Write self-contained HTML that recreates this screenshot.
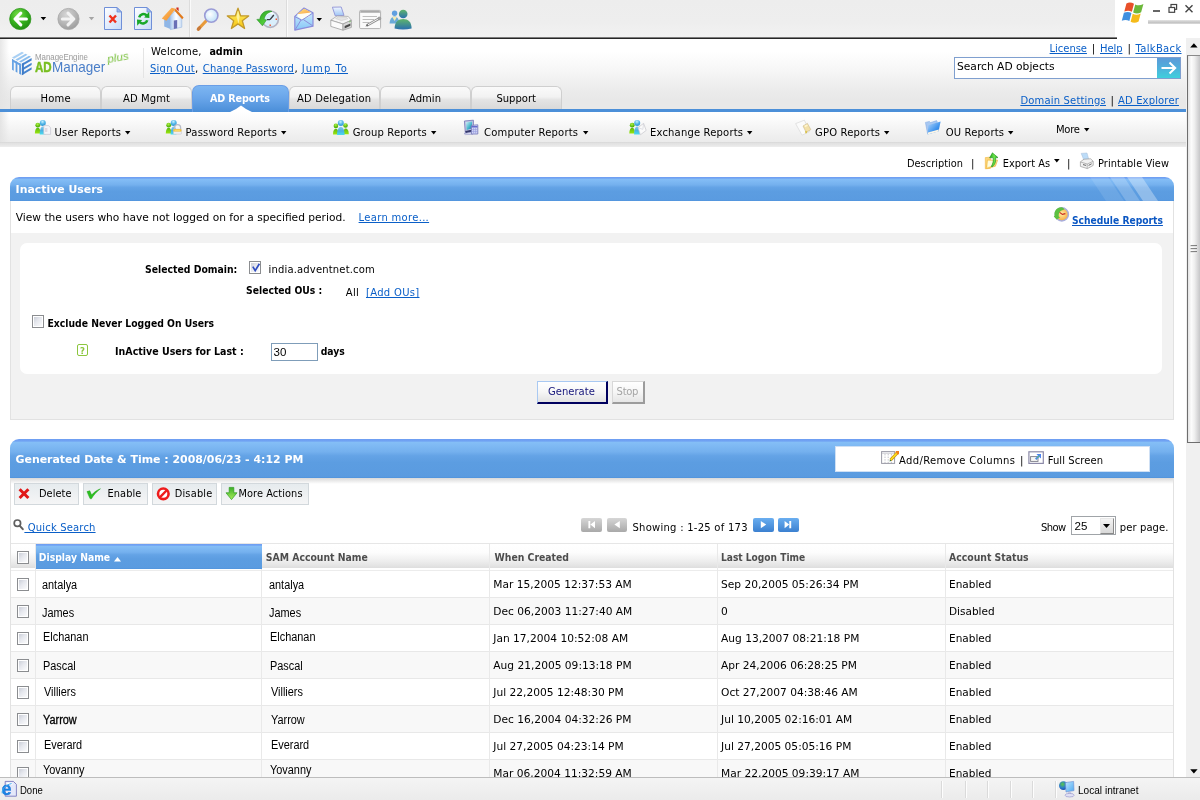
<!DOCTYPE html>
<html lang="en"><head><meta charset="utf-8"><title>ADManager Plus - Inactive Users</title>
<style>
html,body{margin:0;padding:0;background:#fff;}
body{width:1200px;height:800px;overflow:hidden;}
#page{position:relative;width:1200px;height:800px;overflow:hidden;background:#fff;font-family:"DejaVu Sans","Liberation Sans",sans-serif;font-size:10.3px;color:#000;}
.t{will-change:opacity;position:absolute;white-space:nowrap;line-height:20px;height:20px;display:block;}
.v{font-family:"DejaVu Sans","Liberation Sans",sans-serif;}
.c{font-family:"DejaVu Sans Condensed","DejaVu Sans","Liberation Sans",sans-serif;}
.a{font-family:"Liberation Sans","DejaVu Sans",sans-serif;}
svg{position:absolute;overflow:visible;}

</style></head>
<body>
<div id="page">
<div style="position:absolute;left:0px;top:0px;width:1115px;height:37px;background:linear-gradient(to bottom,#ededed 0%,#eeeeee 60%,#f2f2f2 100%);"></div>
<div style="position:absolute;left:0px;top:37px;width:1117px;height:1px;background:#7c7c7c;"></div>
<div style="position:absolute;left:0px;top:38px;width:1117px;height:1px;background:#262626;"></div>
<div style="position:absolute;left:189px;top:0px;width:1px;height:37px;background:#dcdcdc;"></div>
<div style="position:absolute;left:190px;top:0px;width:1px;height:37px;background:#fafafa;"></div>
<div style="position:absolute;left:286px;top:0px;width:1px;height:37px;background:#dcdcdc;"></div>
<div style="position:absolute;left:287px;top:0px;width:1px;height:37px;background:#fafafa;"></div>
<div style="position:absolute;left:1148px;top:20px;width:52px;height:4px;background:linear-gradient(to bottom,#e4e4e4,#c4c4c4 60%,#dcdcdc);"></div>
<div style="position:absolute;left:0px;top:39px;width:1186px;height:71px;background:linear-gradient(to bottom,#ffffff 0%,#ffffff 18%,#f6f6f6 45%,#ececec 70%,#e8e8e8 86%,#e8e8e8 100%);"></div>
<div style="position:absolute;left:0px;top:39px;width:9px;height:71px;background:linear-gradient(to right,rgba(228,228,228,.9),rgba(255,255,255,0));"></div>
<div style="position:absolute;left:143px;top:48px;width:1px;height:30px;background:#e4e4e4;"></div>
<div style="position:absolute;left:0px;top:109px;width:1186px;height:3px;background:#4b8fd8;"></div>
<div style="position:absolute;left:0px;top:112px;width:1186px;height:30px;background:linear-gradient(to bottom,#ffffff 0%,#fbfbfb 25%,#f3f3f3 60%,#ebebeb 100%);"></div>
<div style="position:absolute;left:0px;top:142px;width:1186px;height:5px;background:linear-gradient(to bottom,#d6d6d6 0%,#e1e1e1 25%,#e6e6e6 60%,#eeeeee 100%);"></div>
<div style="position:absolute;left:0px;top:112px;width:9px;height:30px;background:linear-gradient(to right,rgba(226,226,226,.9),rgba(255,255,255,0));"></div>
<div style="position:absolute;left:1186px;top:38px;width:14px;height:740px;background:#f0f0f0;"></div>
<div style="position:absolute;left:1187px;top:55px;width:13px;height:388px;background:linear-gradient(to right,#e4e4e4 0%,#fcfcfc 28%,#eeeeee 55%,#c6c6c8 100%);border-left:1px solid #6e6e6e;border-top:1px solid #8a8a8a;border-bottom:1px solid #6e6e6e;box-sizing:border-box;"></div>
<svg style="left:1186px;top:38px" width="14" height="740"><path d="M4.2 9.5 L11.6 9.5 L7.9 5.2 Z" fill="#000"/><path d="M4.2 731.3 L11.6 731.3 L7.9 735.6 Z" fill="#000"/><path d="M4.6 207.8h6.4M4.6 210.8h6.4M4.6 213.8h6.4" stroke="#555" stroke-width="1"/><path d="M4.6 208.8h6.4M4.6 211.8h6.4M4.6 214.8h6.4" stroke="#fff" stroke-width="1" opacity=".8"/></svg>
<div style="position:absolute;left:0px;top:777px;width:1200px;height:23px;background:linear-gradient(to bottom,#f4f4f4,#ebebeb);border-top:1px solid #bdbdbd;box-sizing:border-box;"></div>
<div style="position:absolute;left:941px;top:781px;width:1px;height:17px;background:#dadada;"></div>
<div style="position:absolute;left:942px;top:781px;width:1px;height:17px;background:#fdfdfd;"></div>
<div style="position:absolute;left:965px;top:781px;width:1px;height:17px;background:#dadada;"></div>
<div style="position:absolute;left:966px;top:781px;width:1px;height:17px;background:#fdfdfd;"></div>
<div style="position:absolute;left:987px;top:781px;width:1px;height:17px;background:#dadada;"></div>
<div style="position:absolute;left:988px;top:781px;width:1px;height:17px;background:#fdfdfd;"></div>
<div style="position:absolute;left:1010px;top:781px;width:1px;height:17px;background:#dadada;"></div>
<div style="position:absolute;left:1011px;top:781px;width:1px;height:17px;background:#fdfdfd;"></div>
<div style="position:absolute;left:1032px;top:781px;width:1px;height:17px;background:#dadada;"></div>
<div style="position:absolute;left:1033px;top:781px;width:1px;height:17px;background:#fdfdfd;"></div>
<div style="position:absolute;left:1055px;top:781px;width:1px;height:17px;background:#dadada;"></div>
<div style="position:absolute;left:1056px;top:781px;width:1px;height:17px;background:#fdfdfd;"></div>
<span class="t v" style="top:42px;font-size:10px;left:151px;letter-spacing:0.225px;">Welcome,</span>
<span class="t v" style="top:42px;font-size:9.6px;left:209.4px;font-weight:bold;">admin</span>
<a class="t v" style="top:59px;font-size:10px;left:150px;color:#0a5fc8;text-decoration:underline;letter-spacing:0.225px;">Sign Out</a>
<span class="t v" style="top:58px;font-size:10.3px;left:195px;">,</span>
<a class="t v" style="top:59px;font-size:10px;left:202.7px;color:#0a5fc8;text-decoration:underline;letter-spacing:0.222px;">Change Password</a>
<span class="t v" style="top:58px;font-size:10.3px;left:294.5px;">,</span>
<a class="t v" style="top:59px;font-size:10px;left:301.8px;color:#0a5fc8;text-decoration:underline;letter-spacing:1.018px;">Jump To</a>
<a class="t v" style="top:39px;font-size:10px;left:1049.6px;color:#0a5fc8;text-decoration:underline;letter-spacing:-0.051px;">License</a>
<span class="t v" style="top:38px;font-size:10.3px;left:1091.8px;">|</span>
<a class="t v" style="top:39px;font-size:10px;left:1100px;color:#0a5fc8;text-decoration:underline;letter-spacing:-0.104px;">Help</a>
<span class="t v" style="top:38px;font-size:10.3px;left:1127.4px;">|</span>
<a class="t v" style="top:39px;font-size:10px;left:1135.4px;color:#0a5fc8;text-decoration:underline;letter-spacing:0.337px;">TalkBack</a>
<a class="t v" style="top:91px;font-size:10px;left:1020.4px;color:#0a5fc8;text-decoration:underline;letter-spacing:0.171px;">Domain Settings</a>
<span class="t v" style="top:90px;font-size:10.3px;left:1110.5px;">|</span>
<a class="t v" style="top:91px;font-size:10px;left:1118px;color:#0a5fc8;text-decoration:underline;letter-spacing:0.144px;">AD Explorer</a>
<div style="position:absolute;left:954px;top:57px;width:227px;height:22px;background:#fff;border:1px solid #7f9fcf;box-sizing:border-box;"></div>
<span class="t v" style="top:57px;font-size:10.7px;left:957px;">Search AD objects</span>
<div style="position:absolute;left:1157px;top:58px;width:23px;height:20px;background:linear-gradient(to bottom,#5c9ad8 0%,#4fb0dc 50%,#3fd0dc 100%);"></div>
<svg style="left:1157px;top:58px" width="23" height="20"><path d="M4.5 10 H18 M12.5 4.5 L18.2 10 L12.5 15.5" fill="none" stroke="#fff" stroke-width="2"/></svg>
<div style="position:absolute;left:10px;top:86px;width:91px;height:23px;background:linear-gradient(to bottom,#fafafa 0%,#f2f2f2 45%,#e4e4e4 58%,#d9d9d9 100%);border:1px solid #cfcfcf;border-bottom:none;border-radius:6px 6px 0 0;box-sizing:border-box;"></div>
<div style="position:absolute;left:101px;top:86px;width:91px;height:23px;background:linear-gradient(to bottom,#fafafa 0%,#f2f2f2 45%,#e4e4e4 58%,#d9d9d9 100%);border:1px solid #cfcfcf;border-bottom:none;border-radius:6px 6px 0 0;box-sizing:border-box;"></div>
<div style="position:absolute;left:192px;top:85px;width:97px;height:27px;background:linear-gradient(to bottom,#7db6f2 0%,#6aa6ea 45%,#4a8ed8 100%);border:1px solid #6a9ee6;border-bottom:none;border-radius:7px 7px 0 0;box-sizing:border-box;"></div>
<div style="position:absolute;left:289px;top:86px;width:91px;height:23px;background:linear-gradient(to bottom,#fafafa 0%,#f2f2f2 45%,#e4e4e4 58%,#d9d9d9 100%);border:1px solid #cfcfcf;border-bottom:none;border-radius:6px 6px 0 0;box-sizing:border-box;"></div>
<div style="position:absolute;left:380px;top:86px;width:91px;height:23px;background:linear-gradient(to bottom,#fafafa 0%,#f2f2f2 45%,#e4e4e4 58%,#d9d9d9 100%);border:1px solid #cfcfcf;border-bottom:none;border-radius:6px 6px 0 0;box-sizing:border-box;"></div>
<div style="position:absolute;left:471px;top:86px;width:91px;height:23px;background:linear-gradient(to bottom,#fafafa 0%,#f2f2f2 45%,#e4e4e4 58%,#d9d9d9 100%);border:1px solid #cfcfcf;border-bottom:none;border-radius:6px 6px 0 0;box-sizing:border-box;"></div>
<span class="t v" style="top:89px;font-size:10px;left:40.6px;letter-spacing:0.156px;">Home</span>
<span class="t v" style="top:89px;font-size:10px;left:123px;letter-spacing:0.107px;">AD Mgmt</span>
<span class="t v" style="top:89px;font-size:9.6px;left:210px;font-weight:bold;color:#fff;letter-spacing:-0.123px;">AD Reports</span>
<span class="t v" style="top:89px;font-size:10px;left:297px;letter-spacing:0.155px;">AD Delegation</span>
<span class="t v" style="top:89px;font-size:10px;left:409px;letter-spacing:0.031px;">Admin</span>
<span class="t v" style="top:89px;font-size:10px;left:496.4px;letter-spacing:0.011px;">Support</span>
<svg style="left:230px;top:105px" width="22" height="7"><path d="M0 7 L6 4 L11 0.5 L16 4 L22 7 Z" fill="#fff"/></svg>
<span class="t v" style="top:123px;font-size:10px;left:54.5px;letter-spacing:0.196px;">User Reports</span>
<svg style="left:125px;top:130.8px" width="6" height="4"><path d="M0 0 H5.4 L2.7 3.4 Z" fill="#000"/></svg>
<span class="t v" style="top:123px;font-size:10px;left:185.5px;letter-spacing:0.217px;">Password Reports</span>
<svg style="left:281px;top:130.8px" width="6" height="4"><path d="M0 0 H5.4 L2.7 3.4 Z" fill="#000"/></svg>
<span class="t v" style="top:123px;font-size:10px;left:352.7px;letter-spacing:0.168px;">Group Reports</span>
<svg style="left:430.7px;top:130.8px" width="6" height="4"><path d="M0 0 H5.4 L2.7 3.4 Z" fill="#000"/></svg>
<span class="t v" style="top:123px;font-size:10px;left:484px;letter-spacing:0.183px;">Computer Reports</span>
<svg style="left:582.7px;top:130.8px" width="6" height="4"><path d="M0 0 H5.4 L2.7 3.4 Z" fill="#000"/></svg>
<span class="t v" style="top:123px;font-size:10px;left:650px;letter-spacing:0.173px;">Exchange Reports</span>
<svg style="left:746.7px;top:130.8px" width="6" height="4"><path d="M0 0 H5.4 L2.7 3.4 Z" fill="#000"/></svg>
<span class="t v" style="top:123px;font-size:10px;left:815px;letter-spacing:0.18px;">GPO Reports</span>
<svg style="left:884px;top:130.8px" width="6" height="4"><path d="M0 0 H5.4 L2.7 3.4 Z" fill="#000"/></svg>
<span class="t v" style="top:123px;font-size:10px;left:945.7px;letter-spacing:0.174px;">OU Reports</span>
<svg style="left:1008px;top:130.8px" width="6" height="4"><path d="M0 0 H5.4 L2.7 3.4 Z" fill="#000"/></svg>
<span class="t v" style="top:120px;font-size:10px;left:1056px;letter-spacing:-0.266px;">More</span>
<svg style="left:1084px;top:127.8px" width="6" height="4"><path d="M0 0 H5.4 L2.7 3.4 Z" fill="#000"/></svg>
<svg style="left:0;top:0" width="430" height="38">
<defs>
<radialGradient id="gback" cx="0.4" cy="0.3" r="0.75"><stop offset="0" stop-color="#7be04a"/><stop offset="0.55" stop-color="#35b01c"/><stop offset="1" stop-color="#1f8a12"/></radialGradient>
<radialGradient id="gfwd" cx="0.4" cy="0.3" r="0.75"><stop offset="0" stop-color="#d6d6d6"/><stop offset="0.6" stop-color="#b4b4b4"/><stop offset="1" stop-color="#9a9a9a"/></radialGradient>
<linearGradient id="gpage" x1="0" y1="0" x2="1" y2="1"><stop offset="0" stop-color="#ffffff"/><stop offset="1" stop-color="#c6daf8"/></linearGradient>
<linearGradient id="garr2" x1="0" y1="0" x2="1" y2="1"><stop offset="0" stop-color="#1f9a1f"/><stop offset="0.6" stop-color="#52cc3a"/><stop offset="1" stop-color="#2aa52a"/></linearGradient>
<linearGradient id="gstar" x1="0" y1="0" x2="0" y2="1"><stop offset="0" stop-color="#fff36a"/><stop offset="1" stop-color="#f7c412"/></linearGradient>
<radialGradient id="gglass" cx="0.4" cy="0.4" r="0.7"><stop offset="0" stop-color="#ffffff"/><stop offset="1" stop-color="#b5dcf7"/></radialGradient>
<linearGradient id="gwall" x1="0" y1="0" x2="1" y2="0"><stop offset="0" stop-color="#a9c9f0"/><stop offset="0.5" stop-color="#ffffff"/><stop offset="1" stop-color="#c9dcf4"/></linearGradient>
<linearGradient id="groof" x1="0" y1="0" x2="1" y2="1"><stop offset="0" stop-color="#ffc067"/><stop offset="1" stop-color="#f08a24"/></linearGradient>
<linearGradient id="gflap" x1="0" y1="0" x2="1" y2="1"><stop offset="0" stop-color="#ffe27a"/><stop offset="1" stop-color="#f79a4a"/></linearGradient>
<linearGradient id="gpaper" x1="0" y1="0" x2="0" y2="1"><stop offset="0" stop-color="#f2f7ff"/><stop offset="1" stop-color="#9cc4f6"/></linearGradient>
<linearGradient id="genv" x1="0" y1="0" x2="0" y2="1"><stop offset="0" stop-color="#dcf2ff"/><stop offset="1" stop-color="#84c6f6"/></linearGradient>
<linearGradient id="gmsn" x1="0" y1="0" x2="0" y2="1"><stop offset="0" stop-color="#5fb56a"/><stop offset="1" stop-color="#2a6fb0"/></linearGradient>
</defs>
<!-- back -->
<circle cx="20.3" cy="19" r="10.6" fill="url(#gback)" stroke="#2a9416" stroke-width="0.8"/>
<path d="M26.4 19 H16 M20.8 13.2 L15 19 L20.8 24.8" fill="none" stroke="#fff" stroke-width="3.1" stroke-linecap="round" stroke-linejoin="round"/>
<path d="M40.6 17 H46.2 L43.4 20.2 Z" fill="#000"/>
<!-- forward -->
<circle cx="68.5" cy="19" r="10.6" fill="url(#gfwd)" stroke="#a8a8a8" stroke-width="0.8"/>
<path d="M62.4 19 H72.8 M68 13.2 L73.8 19 L68 24.8" fill="none" stroke="#f2f2f2" stroke-width="3.1" stroke-linecap="round" stroke-linejoin="round"/>
<path d="M88.8 17 H94.2 L91.5 20.2 Z" fill="#a5a5a5"/>
<!-- stop page -->
<path d="M104.5 7.5 H117 L121.5 12 V29.5 H104.5 Z" fill="url(#gpage)" stroke="#6f8fd8" stroke-width="1"/>
<path d="M117 7.5 V12 H121.5 Z" fill="#9db9ee" stroke="#6f8fd8" stroke-width="0.8"/>
<path d="M109.5 15.5 L116 22.5 M116 15.5 L109.5 22.5" stroke="#f0321e" stroke-width="2.4"/>
<!-- refresh page -->
<path d="M134.5 7.5 H147 L151.5 12 V29.5 H134.5 Z" fill="url(#gpage)" stroke="#6f8fd8" stroke-width="1"/>
<path d="M147 7.5 V12 H151.5 Z" fill="#9db9ee" stroke="#6f8fd8" stroke-width="0.8"/>
<path d="M139.2 17.4 A4.4 4.4 0 0 1 146.6 15.4" fill="none" stroke="#18a82a" stroke-width="2.6"/><path d="M144.2 17.6 L149.2 11.8 L149.4 18 Z" fill="#18a82a"/>
<path d="M147.2 20.2 A4.4 4.4 0 0 1 139.8 22.2" fill="none" stroke="#18a82a" stroke-width="2.6"/><path d="M142.2 20 L137.2 25.8 L137 19.6 Z" fill="#18a82a"/>
<!-- home -->
<path d="M164.2 19 L170.4 15.6 V29 L164.2 26.6 Z" fill="#8fb6e6"/>
<path d="M170.4 15.6 L175 11 L181.8 18.2 V27.2 L170.4 29.6 Z" fill="url(#gwall)" stroke="#9ab8e2" stroke-width="0.6"/>
<path d="M171.6 7.8 L175.6 8.8 L166.4 20.8 L161.8 18.6 Z" fill="url(#groof)"/>
<path d="M175.6 8.8 L183.6 17.4 L182.2 19.2 L174.4 10.6 Z" fill="#e27a1c"/>
<path d="M176.4 7.4 h2.2 v3.8 l-2.2 -2.2 Z" fill="#cf2a1c"/>
<path d="M173.8 20.6 L177.2 20 V28.2 L173.8 28.9 Z" fill="#6a6fb6"/>
<!-- magnifier -->
<path d="M198.5 29 L206.5 20.5" stroke="#e89a3a" stroke-width="3.2" stroke-linecap="round"/>
<path d="M198.3 29.2 L199.6 27.8" stroke="#c87a3a" stroke-width="3.2" stroke-linecap="round"/>
<circle cx="211.3" cy="15.6" r="6.6" fill="url(#gglass)" stroke="#9a9bd6" stroke-width="1.6"/>
<!-- star -->
<path d="M238.0 8.1 L240.6 15.8 L248.7 15.9 L242.3 20.8 L244.6 28.5 L238.0 23.9 L231.4 28.5 L233.7 20.8 L227.3 15.9 L235.4 15.8 Z" fill="url(#gstar)" stroke="#c29a2c" stroke-width="1.3" stroke-linejoin="round"/>
<path d="M238 10.5 L239.6 16.8 L238.6 24 L236.6 17 Z" fill="#fff8b8" opacity=".75"/>
<!-- history -->
<circle cx="270.2" cy="19.2" r="8.2" fill="#d9eefb" stroke="#b4b4c4" stroke-width="1.7"/>
<path d="M266 14.5 A6 6 0 0 1 273.5 14" fill="none" stroke="#fff" stroke-width="2" opacity=".8"/>
<path d="M270 19.6 L273.8 15 M270 19.6 H267" stroke="#3c3c44" stroke-width="1.4"/>
<path d="M277 19.2 h-1.4 M270.2 26 v-1.4" stroke="#f0522a" stroke-width="1.4"/>
<path d="M256.8 19.4 L262.4 25.8 L266.6 19.8 L264.2 19.6 C264.4 15.6 267.2 12.6 272 11.4 C266.4 9.2 260.6 12.6 259.8 19.2 Z" fill="url(#garr2)" stroke="#1f8a1f" stroke-width="0.5"/>
<!-- mail -->
<path d="M294.8 16.4 L304 8 L313 12.8 V26.2 L294.8 30.2 Z" fill="url(#genv)" stroke="#8c8cda" stroke-width="1.2" stroke-linejoin="round"/>
<path d="M297.4 14 L304 8.8 L311 12.2 L304.6 15.6 Z" fill="url(#gflap)"/>
<path d="M297.4 14.2 L311 12.4 L309.2 16.6 L301.8 19.6 L297.4 16.6 Z" fill="#fffdf4"/>
<path d="M294.8 16.6 L301.8 20.2 L313 13 M295 30 L301 20 M313 26 L303.4 19.6" fill="none" stroke="#8c8cda" stroke-width="1"/>
<path d="M316.6 18 H322 L319.3 21.2 Z" fill="#000"/>
<!-- printer -->
<path d="M332.4 7.2 L341.2 7 L344 15.4 L335.2 15.8 Z" fill="url(#gpaper)" stroke="#8f92d6" stroke-width="0.9" stroke-linejoin="round"/>
<path d="M330.8 20.2 L337 16 L348.2 16.4 L351.4 20.2 L343 24 Z" fill="#f6f6f6" stroke="#a8a8a8" stroke-width="0.8" stroke-linejoin="round"/>
<path d="M335.6 18.6 L338.6 16.8 L346.4 17.2 L347.8 18.8 L341.4 20.6 Z" fill="#e4e4e4" stroke="#c4c4c4" stroke-width="0.5"/>
<path d="M330.8 20.2 L343 24 V30.2 L330.8 26.4 Z" fill="#fbfbfb" stroke="#a0a0a0" stroke-width="0.8" stroke-linejoin="round"/>
<path d="M343 24 L351.4 20.2 V27.4 L343 30.2 Z" fill="#d9d9d9" stroke="#a0a0a0" stroke-width="0.8" stroke-linejoin="round"/>
<path d="M344.6 26 L350.4 23.6 V25.8 L344.6 28.4 Z" fill="#4a4a4a"/>
<path d="M349.4 21.8 l1.2 -0.5" stroke="#58c040" stroke-width="1"/>
<!-- edit -->
<rect x="359.6" y="10.4" width="21" height="18.2" rx="1.2" fill="#fafafa" stroke="#b2b2b2" stroke-width="1"/>
<path d="M360.2 12.8 V11.6 Q360.2 10.9 361 10.9 H379.2 Q380 10.9 380 11.6 V12.8 Z" fill="#a9a9a9"/>
<path d="M362.6 16.5 H377 M362.6 19.5 H374 M362.6 22.5 H369" stroke="#bdbdbd" stroke-width="1"/>
<path d="M367.4 25.2 L379 18.6" stroke="#8e8e8e" stroke-width="2.6" stroke-linecap="round"/>
<path d="M368 24.8 L378.4 18.9" stroke="#f4f4f4" stroke-width="1"/>
<circle cx="379.4" cy="18.4" r="1.5" fill="#a4a4a4" stroke="#8a8a8a" stroke-width="0.5"/>
<path d="M365.4 26.6 L367.4 24.2 L368.2 25.8 Z" fill="#666"/>
<!-- messenger -->
<circle cx="394.6" cy="13.2" r="2.7" fill="#5f9fe0"/>
<path d="M389.6 23.5 C389.8 18.5 392 16.4 394.6 16.4 C397.2 16.4 399 18.5 399.4 23.5 Z" fill="#6aaad8"/>
<path d="M392.2 16.8 L394.6 21 L397 16.8 Z" fill="#f2e9b0"/>
<circle cx="403.2" cy="14" r="4.3" fill="url(#gmsn)"/>
<path d="M394.6 28.6 C394.6 21.6 398.4 19 403.2 19 C408 19 411.6 21.6 411.6 28.6 C406 29.8 400 29.8 394.6 28.6 Z" fill="url(#gmsn)"/>
</svg>
<svg style="left:1116px;top:0" width="84" height="38">
<g transform="translate(1.6,-0.4) scale(1.05)">
<path d="M8.4 3.6 C11 2.2 13.4 2.6 15.6 4 L13.6 11.6 C11.2 10.2 9 10.2 6.4 11.4 Z" fill="#e8502a"/>
<path d="M16.8 4.6 C19.4 6 21.8 5.6 24.6 4.2 L22.4 12 C20 13.4 17.4 13.6 14.8 12.2 Z" fill="#6cb83a"/>
<path d="M6 12.6 C8.6 11.4 10.8 11.4 13.2 12.8 L11.2 20.4 C8.8 19 6.4 19 4 20.2 Z" fill="#3f8fe0"/>
<path d="M14.4 13.4 C17 14.8 19.4 14.6 22 13.2 L20 20.8 C17.4 22.2 14.8 22.4 12.4 21 Z" fill="#f5bb1a"/>
</g>
<path d="M37 11 h7" stroke="#555" stroke-width="1.8"/>
<rect x="55" y="4.5" width="5.6" height="4.8" fill="none" stroke="#444" stroke-width="1.2"/>
<rect x="53" y="7.5" width="5.6" height="4.8" fill="#fff" stroke="#444" stroke-width="1.2"/>
<path d="M69.5 5.2 L76.5 12.2 M76.5 5.2 L69.5 12.2" stroke="#444" stroke-width="1.4"/>
</svg>
<span class="t v" style="top:154px;font-size:9.8px;left:907px;letter-spacing:0.02px;">Description</span>
<span class="t v" style="top:153px;font-size:10.3px;left:971px;">|</span>
<span class="t v" style="top:154px;font-size:9.8px;left:1002.7px;letter-spacing:0.05px;">Export As</span>
<svg style="left:1054px;top:159px" width="6" height="4"><path d="M0 0 H5.6 L2.8 3.4 Z" fill="#000"/></svg>
<span class="t v" style="top:153px;font-size:10.3px;left:1067px;">|</span>
<span class="t v" style="top:154px;font-size:9.8px;left:1098px;letter-spacing:0.087px;">Printable View</span>
<div style="position:absolute;left:10px;top:177px;width:1164px;height:24px;background:linear-gradient(to bottom,#6e9ef2 0%,#70a2f3 5%,#84bef6 9%,#74b0ee 33%,#64a3e6 43%,#5c9de1 60%,#5a9be0 96%,#4e92dc 100%);border-radius:9px 9px 0 0;box-sizing:border-box;overflow:hidden;"><svg style="left:1070px;top:0" width="94" height="24"><path d="M10 0 H28 L44 24 H26 Z" fill="rgba(255,255,255,.10)"/><path d="M30 0 H44 L60 24 H46 Z" fill="rgba(255,255,255,.20)"/><path d="M47 0 H62 L78 24 H63 Z" fill="rgba(255,255,255,.32)"/></svg></div>
<div style="position:absolute;left:10px;top:201px;width:1164px;height:219px;background:#f2f2f2;border:1px solid #e2e2e2;border-top:none;box-sizing:border-box;"></div>
<div style="position:absolute;left:11px;top:201px;width:1162px;height:32px;background:#fff;"></div>
<div style="position:absolute;left:20px;top:243px;width:1142px;height:131px;background:#fff;border-radius:7px;"></div>
<span class="t v" style="top:180px;font-size:10.9px;left:15.6px;font-weight:bold;color:#fff;">Inactive Users</span>
<span class="t v" style="top:208px;font-size:10.65px;left:15.8px;">View the users who have not logged on for a specified period.</span>
<a class="t v" style="top:208px;font-size:10px;left:358.6px;color:#0a5fc8;text-decoration:underline;letter-spacing:0.302px;">Learn more...</a>
<a class="t c" style="top:211px;font-size:10.2px;left:1072px;font-weight:bold;color:#0a56c2;text-decoration:underline;">Schedule Reports</a>
<span class="t c" style="top:259px;font-size:10.35px;left:145px;font-weight:bold;">Selected Domain:</span>
<span class="t v" style="top:260px;font-size:10px;left:268.5px;letter-spacing:0.166px;">india.adventnet.com</span>
<span class="t c" style="top:280px;font-size:10.3px;left:246px;font-weight:bold;">Selected OUs :</span>
<span class="t v" style="top:283px;font-size:10px;left:345.8px;letter-spacing:0.3px;">All</span>
<a class="t v" style="top:283px;font-size:10px;left:366px;color:#0a5fc8;text-decoration:underline;letter-spacing:0.306px;">[Add OUs]</a>
<span class="t c" style="top:313px;font-size:10.3px;left:47.5px;font-weight:bold;">Exclude Never Logged On Users</span>
<span class="t c" style="top:341px;font-size:10.55px;left:115px;font-weight:bold;">InActive Users for Last :</span>
<span class="t c" style="top:341px;font-size:10.3px;left:320.7px;font-weight:bold;">days</span>
<div style="position:absolute;left:249px;top:261px;width:12px;height:13px;background:linear-gradient(135deg,#c4c8d2 0%,#e6e8ee 45%,#ffffff 100%);border:1px solid #8b8d90;box-shadow:inset 0 0 0 1px #fff;box-sizing:border-box;"><svg style="left:1px;top:1px" width="10" height="10"><path d="M1.8 3.6 L4.2 7.6 L8.4 0.8" fill="none" stroke="#2e4cc0" stroke-width="1.7"/></svg></div>
<div style="position:absolute;left:32px;top:315px;width:12px;height:13px;background:linear-gradient(135deg,#c4c8d2 0%,#e6e8ee 45%,#ffffff 100%);border:1px solid #8b8d90;box-shadow:inset 0 0 0 1px #fff;box-sizing:border-box;"></div>
<div style="position:absolute;left:271px;top:343px;width:47px;height:18px;background:#fff;border:1px solid #7f9db9;box-sizing:border-box;"></div>
<span class="t a" style="top:342px;font-size:11.5px;left:273.5px;">30</span>
<div style="position:absolute;left:77px;top:344px;width:11px;height:12px;border:1px solid #8cc63e;border-radius:2px;box-sizing:border-box;background:#fff;"></div>
<span class="t v" style="top:341px;font-size:8.5px;left:80px;font-weight:bold;color:#8cc63e;">?</span>
<div style="position:absolute;left:537px;top:380.5px;width:70.5px;height:23.5px;background:linear-gradient(to bottom,#ffffff 0%,#f6f6f6 50%,#e2e2e2 100%);border-style:solid;border-color:#a9c9f2 #00005e #00005e #a9c9f2;border-width:1px 2px 2px 1px;box-sizing:border-box;"></div>
<span class="t v" style="top:382px;font-size:10px;left:548px;color:#15157a;letter-spacing:0.012px;">Generate</span>
<div style="position:absolute;left:611.5px;top:380.5px;width:33.5px;height:23.5px;background:linear-gradient(to bottom,#ffffff 0%,#f6f6f6 50%,#e6e6e6 100%);border-style:solid;border-color:#d8d8d8 #9c9c9c #9c9c9c #d8d8d8;border-width:1px 2px 2px 1px;box-sizing:border-box;"></div>
<span class="t v" style="top:382px;font-size:10px;left:616.6px;color:#a5a5a5;letter-spacing:-0.311px;">Stop</span>
<div style="position:absolute;left:10px;top:439px;width:1164px;height:39px;background:linear-gradient(to bottom,#6e9ef2 0%,#70a2f3 5%,#84bef6 9%,#74b0ee 33%,#64a3e6 43%,#5c9de1 60%,#5a9be0 96%,#4e92dc 100%);border-radius:9px 9px 0 0;box-sizing:border-box;"></div>
<div style="position:absolute;left:10px;top:478px;width:1164px;height:300px;background:#fff;border-left:1px solid #e2e2e2;border-right:1px solid #e2e2e2;box-sizing:border-box;"></div>
<div style="position:absolute;left:11px;top:478px;width:1162px;height:6px;background:linear-gradient(to bottom,#d9d9d9,#ffffff);"></div>
<span class="t v" style="top:450px;font-size:10.95px;left:15.5px;font-weight:bold;color:#fff;">Generated Date &amp; Time : 2008/06/23 - 4:12 PM</span>
<div style="position:absolute;left:835px;top:445.5px;width:315px;height:26.5px;background:#fff;border:1px solid #cfe0f4;box-sizing:border-box;"></div>
<span class="t v" style="top:451px;font-size:10px;left:899px;letter-spacing:0.353px;">Add/Remove Columns</span>
<span class="t v" style="top:450px;font-size:10.3px;left:1020px;">|</span>
<span class="t v" style="top:451px;font-size:10px;left:1047.7px;letter-spacing:0.063px;">Full Screen</span>
<div style="position:absolute;left:13.5px;top:482.5px;width:65px;height:22px;background:linear-gradient(to bottom,#e6ebee,#f5f5f6);border:1px solid #d2d8dc;box-sizing:border-box;"></div>
<div style="position:absolute;left:82.7px;top:482.5px;width:65px;height:22px;background:linear-gradient(to bottom,#e6ebee,#f5f5f6);border:1px solid #d2d8dc;box-sizing:border-box;"></div>
<div style="position:absolute;left:152px;top:482.5px;width:65.3px;height:22px;background:linear-gradient(to bottom,#e6ebee,#f5f5f6);border:1px solid #d2d8dc;box-sizing:border-box;"></div>
<div style="position:absolute;left:221.3px;top:482.5px;width:87.5px;height:22px;background:linear-gradient(to bottom,#e6ebee,#f5f5f6);border:1px solid #d2d8dc;box-sizing:border-box;"></div>
<span class="t v" style="top:484px;font-size:9.8px;left:38.9px;letter-spacing:0.099px;">Delete</span>
<span class="t v" style="top:484px;font-size:9.8px;left:107.5px;letter-spacing:0.075px;">Enable</span>
<span class="t v" style="top:484px;font-size:9.8px;left:174.7px;letter-spacing:0.209px;">Disable</span>
<span class="t v" style="top:484px;font-size:9.8px;left:238.5px;letter-spacing:0.074px;">More Actions</span>
<a class="t v" style="top:518px;font-size:10px;left:24.4px;color:#0a5fc8;text-decoration:underline;letter-spacing:0.167px;"> Quick Search</a>
<span class="t v" style="top:518px;font-size:10px;left:632.5px;letter-spacing:0.252px;">Showing : 1-25 of 173</span>
<span class="t v" style="top:518px;font-size:10px;left:1041px;letter-spacing:-0.578px;">Show</span>
<span class="t v" style="top:518px;font-size:10px;left:1119.8px;letter-spacing:0.093px;">per page.</span>
<div style="position:absolute;left:1071px;top:516px;width:45px;height:19px;background:#fff;border:1px solid #a0a4a8;box-sizing:border-box;"></div>
<span class="t a" style="top:516px;font-size:11.5px;left:1074.5px;">25</span>
<div style="position:absolute;left:1100px;top:518px;width:13.5px;height:15.5px;background:linear-gradient(to bottom,#f4f4f4,#d8d8d8);border:1px solid #8a8a8a;border-top-color:#e8e8e8;border-left-color:#e8e8e8;box-sizing:border-box;"><svg style="left:2.2px;top:5px" width="8" height="5"><path d="M0 0 H7 L3.5 4 Z" fill="#000"/></svg></div>
<div style="position:absolute;left:581px;top:518px;width:20.5px;height:14px;background:linear-gradient(to bottom,#d6d6d6,#a9a9a9);border-radius:2px;"><svg style="left:0;top:0" width="20.5" height="14"><path d="M7.4 3 h1.9 v7.2 h-1.9z M14 3 L9.4 6.6 L14 10.2 Z" fill="#fff"/></svg></div>
<div style="position:absolute;left:606.6px;top:518px;width:20.5px;height:14px;background:linear-gradient(to bottom,#d6d6d6,#a9a9a9);border-radius:2px;"><svg style="left:0;top:0" width="20.5" height="14"><path d="M12.8 3 L7.4 6.6 L12.8 10.2 Z" fill="#fff"/></svg></div>
<div style="position:absolute;left:753px;top:518px;width:20.5px;height:14px;background:linear-gradient(to bottom,#6aaef0,#3b80d0);border-radius:2px;"><svg style="left:0;top:0" width="20.5" height="14"><path d="M7.8 3 L13.2 6.6 L7.8 10.2 Z" fill="#fff"/></svg></div>
<div style="position:absolute;left:778px;top:518px;width:20.5px;height:14px;background:linear-gradient(to bottom,#6aaef0,#3b80d0);border-radius:2px;"><svg style="left:0;top:0" width="20.5" height="14"><path d="M13.2 3 h-1.9 v7.2 h1.9z M6.6 3 L11.2 6.6 L6.6 10.2 Z" fill="#fff"/></svg></div>
<div style="position:absolute;left:11px;top:543px;width:1162px;height:1px;background:#e6e6e6;"></div>
<div style="position:absolute;left:11px;top:544px;width:1162px;height:24px;background:linear-gradient(to bottom,#ffffff 0%,#fdfdfd 35%,#ececec 75%,#dedede 100%);"></div>
<div style="position:absolute;left:36px;top:544px;width:226px;height:25px;background:linear-gradient(to bottom,#6e9ef2 0%,#70a2f3 5%,#84bef6 9%,#74b0ee 33%,#64a3e6 43%,#5c9de1 60%,#5a9be0 96%,#4e92dc 100%);"></div>
<div style="position:absolute;left:11px;top:570px;width:1162px;height:1px;background:#ececec;"></div>
<div style="position:absolute;left:11px;top:597px;width:1162px;height:1px;background:#e8e8e8;"></div>
<div style="position:absolute;left:11px;top:598px;width:1162px;height:26px;background:#f8f8f8;"></div>
<div style="position:absolute;left:11px;top:624px;width:1162px;height:1px;background:#e8e8e8;"></div>
<div style="position:absolute;left:11px;top:651px;width:1162px;height:1px;background:#e8e8e8;"></div>
<div style="position:absolute;left:11px;top:652px;width:1162px;height:26px;background:#f8f8f8;"></div>
<div style="position:absolute;left:11px;top:678px;width:1162px;height:1px;background:#e8e8e8;"></div>
<div style="position:absolute;left:11px;top:705px;width:1162px;height:1px;background:#e8e8e8;"></div>
<div style="position:absolute;left:11px;top:706px;width:1162px;height:26px;background:#f8f8f8;"></div>
<div style="position:absolute;left:11px;top:732px;width:1162px;height:1px;background:#e8e8e8;"></div>
<div style="position:absolute;left:11px;top:759px;width:1162px;height:1px;background:#e8e8e8;"></div>
<div style="position:absolute;left:11px;top:760px;width:1162px;height:26px;background:#f8f8f8;"></div>
<div style="position:absolute;left:11px;top:786px;width:1162px;height:1px;background:#e8e8e8;"></div>
<div style="position:absolute;left:35px;top:544px;width:1px;height:234px;background:#e9e9e9;"></div>
<div style="position:absolute;left:261px;top:544px;width:1px;height:234px;background:#e9e9e9;"></div>
<div style="position:absolute;left:489px;top:544px;width:1px;height:234px;background:#e9e9e9;"></div>
<div style="position:absolute;left:717px;top:544px;width:1px;height:234px;background:#e9e9e9;"></div>
<div style="position:absolute;left:945px;top:544px;width:1px;height:234px;background:#e9e9e9;"></div>
<div style="position:absolute;left:36px;top:544px;width:226px;height:25px;background:linear-gradient(to bottom,#6e9ef2 0%,#70a2f3 5%,#84bef6 9%,#74b0ee 33%,#64a3e6 43%,#5c9de1 60%,#5a9be0 96%,#4e92dc 100%);"></div>
<div style="position:absolute;left:17px;top:551px;width:12px;height:13px;background:linear-gradient(135deg,#c4c8d2 0%,#e6e8ee 45%,#ffffff 100%);border:1px solid #8b8d90;box-shadow:inset 0 0 0 1px #fff;box-sizing:border-box;"></div>
<span class="t c" style="top:547px;font-size:10.3px;left:38.8px;font-weight:bold;color:#fff;">Display Name</span>
<svg style="left:114px;top:556.5px" width="8" height="5"><path d="M0 4.6 H7 L3.5 0 Z" fill="#fff"/></svg>
<span class="t c" style="top:547px;font-size:10.35px;left:265.8px;font-weight:bold;color:#4d4d4d;">SAM Account Name</span>
<span class="t c" style="top:547px;font-size:10.35px;left:494.5px;font-weight:bold;color:#4d4d4d;">When Created</span>
<span class="t c" style="top:548px;font-size:10.1px;left:721px;font-weight:bold;color:#4d4d4d;">Last Logon Time</span>
<span class="t c" style="top:547px;font-size:10.35px;left:949px;font-weight:bold;color:#4d4d4d;">Account Status</span>
<div style="position:absolute;left:17px;top:578px;width:12px;height:13px;background:linear-gradient(135deg,#c4c8d2 0%,#e6e8ee 45%,#ffffff 100%);border:1px solid #8b8d90;box-shadow:inset 0 0 0 1px #fff;box-sizing:border-box;"></div>
<span class="t a" style="top:575px;font-size:12px;left:41.9px;transform:scaleX(.908);transform-origin:0 0;">antalya</span>
<span class="t a" style="top:575px;font-size:12px;left:269.4px;transform:scaleX(.908);transform-origin:0 0;">antalya</span>
<span class="t v" style="top:575px;font-size:10.65px;left:493.3px;">Mar 15,2005 12:37:53 AM</span>
<span class="t v" style="top:575px;font-size:10.65px;left:721px;">Sep 20,2005 05:26:34 PM</span>
<span class="t v" style="top:574px;font-size:10.5px;left:949px;">Enabled</span>
<div style="position:absolute;left:17px;top:605px;width:12px;height:13px;background:linear-gradient(135deg,#c4c8d2 0%,#e6e8ee 45%,#ffffff 100%);border:1px solid #8b8d90;box-shadow:inset 0 0 0 1px #fff;box-sizing:border-box;"></div>
<span class="t a" style="top:603px;font-size:12px;left:41.9px;transform:scaleX(.908);transform-origin:0 0;">James</span>
<span class="t a" style="top:603px;font-size:12px;left:269.4px;transform:scaleX(.908);transform-origin:0 0;">James</span>
<span class="t v" style="top:602px;font-size:10.65px;left:493.3px;">Dec 06,2003 11:27:40 AM</span>
<span class="t v" style="top:602px;font-size:10.65px;left:721px;">0</span>
<span class="t v" style="top:601px;font-size:10.5px;left:949px;">Disabled</span>
<div style="position:absolute;left:17px;top:632px;width:12px;height:13px;background:linear-gradient(135deg,#c4c8d2 0%,#e6e8ee 45%,#ffffff 100%);border:1px solid #8b8d90;box-shadow:inset 0 0 0 1px #fff;box-sizing:border-box;"></div>
<span class="t a" style="top:627px;font-size:12px;left:42.7px;transform:scaleX(.908);transform-origin:0 0;">Elchanan</span>
<span class="t a" style="top:627px;font-size:12px;left:270.4px;transform:scaleX(.908);transform-origin:0 0;">Elchanan</span>
<span class="t v" style="top:629px;font-size:10.65px;left:493.3px;">Jan 17,2004 10:52:08 AM</span>
<span class="t v" style="top:629px;font-size:10.65px;left:721px;">Aug 13,2007 08:21:18 PM</span>
<span class="t v" style="top:628px;font-size:10.5px;left:949px;">Enabled</span>
<div style="position:absolute;left:17px;top:659px;width:12px;height:13px;background:linear-gradient(135deg,#c4c8d2 0%,#e6e8ee 45%,#ffffff 100%);border:1px solid #8b8d90;box-shadow:inset 0 0 0 1px #fff;box-sizing:border-box;"></div>
<span class="t a" style="top:656px;font-size:12px;left:42.7px;transform:scaleX(.908);transform-origin:0 0;">Pascal</span>
<span class="t a" style="top:656px;font-size:12px;left:270.4px;transform:scaleX(.908);transform-origin:0 0;">Pascal</span>
<span class="t v" style="top:656px;font-size:10.65px;left:493.3px;">Aug 21,2005 09:13:18 PM</span>
<span class="t v" style="top:656px;font-size:10.65px;left:721px;">Apr 24,2006 06:28:25 PM</span>
<span class="t v" style="top:655px;font-size:10.5px;left:949px;">Enabled</span>
<div style="position:absolute;left:17px;top:686px;width:12px;height:13px;background:linear-gradient(135deg,#c4c8d2 0%,#e6e8ee 45%,#ffffff 100%);border:1px solid #8b8d90;box-shadow:inset 0 0 0 1px #fff;box-sizing:border-box;"></div>
<span class="t a" style="top:682px;font-size:12px;left:43.7px;transform:scaleX(.908);transform-origin:0 0;">Villiers</span>
<span class="t a" style="top:682px;font-size:12px;left:271.2px;transform:scaleX(.908);transform-origin:0 0;">Villiers</span>
<span class="t v" style="top:683px;font-size:10.65px;left:493.3px;">Jul 22,2005 12:48:30 PM</span>
<span class="t v" style="top:683px;font-size:10.65px;left:721px;">Oct 27,2007 04:38:46 AM</span>
<span class="t v" style="top:682px;font-size:10.5px;left:949px;">Enabled</span>
<div style="position:absolute;left:17px;top:713px;width:12px;height:13px;background:linear-gradient(135deg,#c4c8d2 0%,#e6e8ee 45%,#ffffff 100%);border:1px solid #8b8d90;box-shadow:inset 0 0 0 1px #fff;box-sizing:border-box;"></div>
<span class="t a" style="top:710px;font-size:12px;left:42.7px;transform:scaleX(.908);transform-origin:0 0;-webkit-text-stroke:0.3px #000;">Yarrow</span>
<span class="t a" style="top:710px;font-size:12px;left:270.8px;transform:scaleX(.908);transform-origin:0 0;">Yarrow</span>
<span class="t v" style="top:710px;font-size:10.65px;left:493.3px;">Dec 16,2004 04:32:26 PM</span>
<span class="t v" style="top:710px;font-size:10.65px;left:721px;">Jul 10,2005 02:16:01 AM</span>
<span class="t v" style="top:709px;font-size:10.5px;left:949px;">Enabled</span>
<div style="position:absolute;left:17px;top:740px;width:12px;height:13px;background:linear-gradient(135deg,#c4c8d2 0%,#e6e8ee 45%,#ffffff 100%);border:1px solid #8b8d90;box-shadow:inset 0 0 0 1px #fff;box-sizing:border-box;"></div>
<span class="t a" style="top:735px;font-size:12px;left:43.7px;transform:scaleX(.908);transform-origin:0 0;">Everard</span>
<span class="t a" style="top:735px;font-size:12px;left:271.2px;transform:scaleX(.908);transform-origin:0 0;">Everard</span>
<span class="t v" style="top:737px;font-size:10.65px;left:493.3px;">Jul 27,2005 04:23:14 PM</span>
<span class="t v" style="top:737px;font-size:10.65px;left:721px;">Jul 27,2005 05:05:16 PM</span>
<span class="t v" style="top:736px;font-size:10.5px;left:949px;">Enabled</span>
<div style="position:absolute;left:17px;top:767px;width:12px;height:13px;background:linear-gradient(135deg,#c4c8d2 0%,#e6e8ee 45%,#ffffff 100%);border:1px solid #8b8d90;box-shadow:inset 0 0 0 1px #fff;box-sizing:border-box;"></div>
<span class="t a" style="top:760px;font-size:12px;left:43.0px;transform:scaleX(.908);transform-origin:0 0;">Yovanny</span>
<span class="t a" style="top:760px;font-size:12px;left:269.9px;transform:scaleX(.908);transform-origin:0 0;">Yovanny</span>
<span class="t v" style="top:764px;font-size:10.65px;left:493.3px;">Mar 06,2004 11:32:59 AM</span>
<span class="t v" style="top:764px;font-size:10.65px;left:721px;">Mar 22,2005 09:39:17 AM</span>
<span class="t v" style="top:763px;font-size:10.5px;left:949px;">Enabled</span>
<div style="position:absolute;left:0px;top:777px;width:1200px;height:23px;background:linear-gradient(to bottom,#f4f4f4,#ebebeb);border-top:1px solid #bdbdbd;box-sizing:border-box;"></div>
<div style="position:absolute;left:941px;top:781px;width:1px;height:17px;background:#dadada;"></div>
<div style="position:absolute;left:942px;top:781px;width:1px;height:17px;background:#fdfdfd;"></div>
<div style="position:absolute;left:965px;top:781px;width:1px;height:17px;background:#dadada;"></div>
<div style="position:absolute;left:966px;top:781px;width:1px;height:17px;background:#fdfdfd;"></div>
<div style="position:absolute;left:987px;top:781px;width:1px;height:17px;background:#dadada;"></div>
<div style="position:absolute;left:988px;top:781px;width:1px;height:17px;background:#fdfdfd;"></div>
<div style="position:absolute;left:1010px;top:781px;width:1px;height:17px;background:#dadada;"></div>
<div style="position:absolute;left:1011px;top:781px;width:1px;height:17px;background:#fdfdfd;"></div>
<div style="position:absolute;left:1032px;top:781px;width:1px;height:17px;background:#dadada;"></div>
<div style="position:absolute;left:1033px;top:781px;width:1px;height:17px;background:#fdfdfd;"></div>
<div style="position:absolute;left:1055px;top:781px;width:1px;height:17px;background:#dadada;"></div>
<div style="position:absolute;left:1056px;top:781px;width:1px;height:17px;background:#fdfdfd;"></div>
<span class="t a" style="top:780px;font-size:11px;left:20.4px;transform:scaleX(.865);transform-origin:0 0;">Done</span>
<span class="t a" style="top:780px;font-size:11px;left:1077.5px;transform:scaleX(.916);transform-origin:0 0;">Local intranet</span>
<svg style="left:11px;top:51px" width="22" height="25">
<path d="M1.0 6.6 L11.0 0.8 L13.0 1.9 L3.0 7.7 Z" fill="#a9d0f4"/>
<path d="M4.5 8.6 L14.5 2.7 L16.5 3.8 L6.5 9.7 Z" fill="#98c6f1"/>
<path d="M8.0 10.5 L18.0 4.7 L20.0 5.8 L10.0 11.6 Z" fill="#88bcee"/>
<path d="M1.0 8.0 L2.8 9.0 L2.8 19.8 L1.0 18.8 Z" fill="#6aa6e6"/>
<path d="M4.6 10.0 L6.4 11.0 L6.4 21.8 L4.6 20.8 Z" fill="#629fe2"/>
<path d="M8.2 12.0 L10.0 13.0 L10.0 23.8 L8.2 22.8 Z" fill="#5a98de"/>
<path d="M1.0 8.0 L10.0 13.0 L10.0 15.2 L1.0 10.2 Z" fill="#66a2e4"/>
<path d="M10.9 12.8 L20.6 7.1 L20.6 9.4 L10.9 15.1 Z" fill="#4584d0"/>
<path d="M10.9 17.4 L20.6 11.7 L20.6 14.0 L10.9 19.7 Z" fill="#4584d0"/>
<path d="M10.9 22.0 L20.6 16.3 L20.6 18.6 L10.9 24.3 Z" fill="#4584d0"/>
<path d="M10.9 12.8 L12.9 11.6 L12.9 23.1 L10.9 24.3 Z" fill="#3f7cc8"/>
</svg>
<span class="t a" style="top:47px;font-size:9px;left:35.4px;color:#9b9b9b;transform:scaleX(.875);transform-origin:0 0;">ManageEngine</span>
<span class="t a" style="top:57px;font-size:15px;left:34.8px;font-weight:bold;color:#78be20;transform:scaleX(.77);transform-origin:0 0;-webkit-text-stroke:0.5px #78be20;">AD</span>
<span class="t a" style="top:57px;font-size:15px;left:52.4px;color:#4a7ec8;transform:scaleX(.9);transform-origin:0 0;">Manager</span>
<span class="t a" style="top:49px;font-size:11.5px;left:108.6px;color:#7dc242;font-style:italic;transform:rotate(-10deg) scaleX(1.02);transform-origin:0 100%;">plus</span>
<svg style="left:0;top:112px" width="1186" height="32">
<defs>
<radialGradient id="pg" cx="0.45" cy="0.3" r="0.8"><stop offset="0" stop-color="#b6f04a"/><stop offset="0.55" stop-color="#5fc010"/><stop offset="1" stop-color="#3a9a08"/></radialGradient>
<linearGradient id="pgb" x1="0" y1="0" x2="0" y2="1"><stop offset="0" stop-color="#5cb812"/><stop offset="1" stop-color="#9be60e"/></linearGradient>
<radialGradient id="pb" cx="0.45" cy="0.3" r="0.8"><stop offset="0" stop-color="#c8f0ff"/><stop offset="0.5" stop-color="#4fb4e6"/><stop offset="1" stop-color="#2a8cd0"/></radialGradient>
<linearGradient id="pbb" x1="0" y1="0" x2="0" y2="1"><stop offset="0" stop-color="#8ccdf0"/><stop offset="0.5" stop-color="#4ab0e0"/><stop offset="1" stop-color="#48dcf0"/></linearGradient>
<linearGradient id="fold" x1="0" y1="0" x2="1" y2="1"><stop offset="0" stop-color="#b8d8fa"/><stop offset="0.6" stop-color="#3f94ee"/><stop offset="1" stop-color="#1f6fd8"/></linearGradient>
<linearGradient id="scr" x1="0" y1="0" x2="1" y2="1"><stop offset="0" stop-color="#d8f2fa"/><stop offset="0.6" stop-color="#3fb4c8"/><stop offset="1" stop-color="#3a58b0"/></linearGradient>

</defs>
<!-- user reports -->
<g transform="translate(34.5,0)">
<path d="M0.4 21.6 C0.4 17.6 1.6 15.8 3.3 15.8 C5 15.8 6 17.6 6 21.6 Z" fill="url(#pgb)"/>
<circle cx="3.3" cy="13.2" r="2.4" fill="url(#pg)"/>
<path d="M5.2 22.4 C5.2 17 6.6 14.4 8.3 14.4 C10 14.4 11 17 11 22.4 Z" fill="url(#pbb)"/>
<circle cx="8.3" cy="10.9" r="3" fill="url(#pb)"/>
</g>
<path d="M43.8 13.6 H48.6 L50.6 15.8 V22.4 H43.8 Z" fill="#f4f4f8" stroke="#c4c4d0" stroke-width="0.7"/>
<path d="M45 17 h2.4 M45 19 h2.4" stroke="#b9a8b8" stroke-width="0.7"/>
<!-- password reports -->
<g transform="translate(165.4,0)">
<path d="M0.4 21.6 C0.4 17.6 1.6 15.8 3.3 15.8 C5 15.8 6 17.6 6 21.6 Z" fill="url(#pgb)"/>
<circle cx="3.3" cy="13.2" r="2.4" fill="url(#pg)"/>
<path d="M5.2 22.4 C5.2 17 6.6 14.4 8.3 14.4 C10 14.4 11 17 11 22.4 Z" fill="url(#pbb)"/>
<circle cx="8.3" cy="10.9" r="3" fill="url(#pb)"/>
</g>
<path d="M174.6 17.4 V15.6 A3 3 0 0 1 180.6 15.6 V17.4" fill="none" stroke="#b8bcc8" stroke-width="1.3"/>
<rect x="173.4" y="17.2" width="8" height="5" rx="0.6" fill="#eeeef2" stroke="#c0c0c8" stroke-width="0.5"/>
<rect x="173.4" y="17.2" width="8" height="2.4" rx="0.6" fill="#f0b820"/>
<rect x="174.4" y="17.9" width="6" height="0.9" fill="#fde27a"/>
<!-- group reports -->
<path d="M333 22.4 C333 18.6 334.2 16.8 335.9 16.8 C337.6 16.8 338.4 18.6 338.4 22.4 Z" fill="url(#pgb)"/>
<circle cx="335.9" cy="13.9" r="2.3" fill="url(#pg)"/>
<path d="M343.4 22.2 C343.4 18.4 344.2 16.6 345.6 16.6 C347.4 16.6 348.8 18.4 348.8 22.2 Z" fill="url(#pgb)"/>
<circle cx="345.5" cy="13.5" r="2.3" fill="url(#pg)"/>
<path d="M337 23 C337 17.6 338.8 14.8 340.8 14.8 C342.8 14.8 344.6 17.6 344.6 23 Z" fill="url(#pbb)"/>
<circle cx="340.8" cy="11.1" r="3" fill="url(#pb)"/>
<!-- computer reports -->
<path d="M464.4 9 L473.4 8.2 V19.4 L465.4 21.6 Z" fill="#c4c6e4" stroke="#6f72b4" stroke-width="0.8"/>
<path d="M465.8 10.2 L472.2 9.6 L471.8 16.6 L466.6 18 Z" fill="url(#scr)"/>
<path d="M465.2 19 L472.6 17.4 V19.4 L466 21.2 Z" fill="#34386a"/>
<path d="M464 21.6 L471.6 20 L472.6 22.4 L465.4 22.6 Z" fill="#d8daf0" stroke="#8a8cc0" stroke-width="0.5"/>
<path d="M471.4 13.4 L477.8 12.8 V22 H471.4 Z" fill="#d4d8f8" stroke="#6f72b4" stroke-width="0.8"/>
<path d="M471.8 14.8 H477.4" stroke="#4a4ec0" stroke-width="1.2"/>
<path d="M473.6 15.6 V21.6 M475.6 15.6 V21.6 M471.8 17.6 H477.4 M471.8 19.6 H477.4" stroke="#9498dc" stroke-width="0.6"/>
<!-- exchange reports -->
<g transform="translate(628.9,0)">
<path d="M0.4 21.6 C0.4 17.6 1.6 15.8 3.3 15.8 C5 15.8 6 17.6 6 21.6 Z" fill="url(#pgb)"/>
<circle cx="3.3" cy="13.2" r="2.4" fill="url(#pg)"/>
<path d="M5.2 22.4 C5.2 17 6.6 14.4 8.3 14.4 C10 14.4 11 17 11 22.4 Z" fill="url(#pbb)"/>
<circle cx="8.3" cy="10.9" r="3" fill="url(#pb)"/>
</g>
<path d="M638 15.6 L643.6 11.4 L646.2 18.4 L640.4 22.8 Z" fill="#fafafa" stroke="#c6c6cc" stroke-width="0.7"/>
<path d="M638 15.6 L642.8 17.4 L643.6 11.4" fill="none" stroke="#cfcfd6" stroke-width="0.6"/>
<!-- gpo reports -->
<path d="M795.6 11.6 L804.4 8.2 L809.6 19.6 L802 23.2 Z" fill="#fbfbfb" stroke="#dcdcdc" stroke-width="0.8"/>
<path d="M803 14 L807.4 11.4 L810.8 17.6 L806.2 20.4 Z" fill="#f3e0a8" stroke="#c9b88a" stroke-width="0.6"/>
<path d="M804.4 13.8 L807 12.4 L807.8 13.8 L805.2 15.2 Z" fill="#fff6d0"/>
<path d="M805 19.6 L806.6 18.8 L807 21 L805.6 21.6 Z" fill="#d8c040"/>
<!-- ou reports -->
<path d="M925.4 10.4 L929.4 9.4 L930.6 10.6 L936.6 8.6 L937.4 10.2 L927.6 21.8 Z" fill="#a8c8f2" stroke="#7aa4e0" stroke-width="0.5"/>
<path d="M928.4 13.2 L940.6 9.6 L938.6 19.2 L927.6 22.4 Z" fill="url(#fold)"/>
<path d="M928 20.6 L938.8 17.4 L938.4 19.4 L927.6 22.6 Z" fill="#fdf6e6"/>
</svg>
<svg style="left:0;top:0" width="1200" height="800" pointer-events="none">
<defs>
<linearGradient id="yfold" x1="0" y1="0" x2="1" y2="1"><stop offset="0" stop-color="#fffbd6"/><stop offset="1" stop-color="#f8cc50"/></linearGradient>
<linearGradient id="garr" x1="0" y1="0" x2="1" y2="0"><stop offset="0" stop-color="#1c9a1c"/><stop offset="0.55" stop-color="#6ee84a"/><stop offset="1" stop-color="#1c9a1c"/></linearGradient>
<linearGradient id="gdown" x1="0" y1="0" x2="0" y2="1"><stop offset="0" stop-color="#3cae28"/><stop offset="1" stop-color="#a8ee5a"/></linearGradient>
<radialGradient id="clk" cx="0.5" cy="0.45" r="0.6"><stop offset="0" stop-color="#fff0a8"/><stop offset="1" stop-color="#f5a030"/></radialGradient>
<radialGradient id="globe" cx="0.4" cy="0.35" r="0.7"><stop offset="0" stop-color="#5ac84a"/><stop offset="0.6" stop-color="#2a7ad0"/><stop offset="1" stop-color="#1a4aa0"/></radialGradient>
<linearGradient id="mon" x1="0" y1="0" x2="1" y2="1"><stop offset="0" stop-color="#bfe6ff"/><stop offset="1" stop-color="#4aa8f0"/></linearGradient>
</defs>
<!-- export as -->
<path d="M985.3 157.6 L989.6 157.2 L990.4 158.6 L990.4 168.4 L985.3 168.8 Z" fill="#fbd77a" stroke="#f2b440" stroke-width="0.6"/>
<path d="M987.4 160 L997.6 160.2 L995.4 166.2 L986.2 168.6 Z" fill="url(#yfold)" stroke="#f0b440" stroke-width="0.7"/>
<path d="M988.2 161 L993 161 L991.8 165.8 L987.6 167 Z" fill="#fffce0"/>
<path d="M991.2 166.4 C993.2 163.4 993.6 160.6 993.2 157.8 L989.6 157.8 L992.4 152.8 L998 157.6 L995.6 157.8 C996.2 161.4 995 164.8 992.2 167 Z" fill="url(#garr)" stroke="#128212" stroke-width="0.5"/>
<!-- printable view -->
<path d="M1081.2 153.4 L1087 153 L1088.8 159.6 L1084 160.4 Z" fill="#bcdcf8" stroke="#a4bcd8" stroke-width="0.5"/>
<path d="M1080.4 161.8 L1084 159.2 L1090.6 158.8 L1093.2 161.2 V165.4 L1087.4 168.6 L1080.4 166.4 Z" fill="#f1f1f1" stroke="#9a9a9a" stroke-width="0.7"/>
<path d="M1080.6 162 L1087.2 164 L1093 161.4 M1087.2 164 V168.4" fill="none" stroke="#8e8e8e" stroke-width="0.6"/>
<path d="M1083 164.6 L1086 165.4 M1088.6 165.4 L1091.6 163.8" stroke="#555" stroke-width="0.9"/>
<!-- schedule reports -->
<circle cx="1061.8" cy="214.4" r="6.6" fill="url(#clk)" stroke="#a8aede" stroke-width="1.5"/>
<path d="M1061.4 207.2 C1056.6 207.2 1054 211 1054.6 215.4 L1053.8 216.6 L1056.6 219.4 L1060 217.6 L1058.8 216.4 C1058.4 212.8 1060 210.2 1064.4 209.4 C1063.8 208 1062.8 207.4 1061.4 207.2 Z" fill="#5cc040"/>
<path d="M1059.6 212.4 L1062.4 214.4 L1065.4 213.6" fill="none" stroke="#c8281c" stroke-width="1.1"/>
<!-- delete -->
<path d="M19.6 489.2 L28.4 498 M28.4 489.2 L19.6 498" stroke="#e01818" stroke-width="3"/>
<!-- enable -->
<path d="M87 491.6 L89.8 490.8 L91.6 495 C94 492.2 96.8 490.2 100.4 488.8 C96.6 491.6 93.6 495 91.4 498.8 L90 498.6 Z" fill="#2cc020" stroke="#1ea016" stroke-width="0.5"/>
<!-- disable -->
<circle cx="163.3" cy="493.8" r="5.3" fill="#fff" stroke="#ee1c1c" stroke-width="2.6"/>
<path d="M159.6 497.6 L167 490" stroke="#ee1c1c" stroke-width="2.4"/>
<!-- more actions -->
<path d="M229.2 487.4 H233.8 V492.8 H237 L231.5 499.6 L226 492.8 H229.2 Z" fill="url(#gdown)" stroke="#2a9a1e" stroke-width="0.7"/>
<!-- quick search -->
<circle cx="17.4" cy="523.2" r="3.2" fill="#fff" stroke="#5f5f5f" stroke-width="1.7"/>
<path d="M19.8 525.8 L22.8 529.2" stroke="#5f5f5f" stroke-width="2" stroke-linecap="round"/>
<!-- add/remove columns -->
<rect x="881.6" y="451.6" width="13" height="11.8" fill="#fff" stroke="#9a9aa6" stroke-width="1"/>
<path d="M882 453.2 H894.4" stroke="#c8c8d0" stroke-width="1"/>
<path d="M885 454 V463 M888.2 454 V463 M891.4 454 V463" stroke="#b4b4bc" stroke-width="0.8" stroke-dasharray="1.4 1.2"/>
<path d="M890.6 460 L897.6 452.4" stroke="#c88a10" stroke-width="3"/>
<path d="M890.6 460 L897.6 452.4" stroke="#fbe21e" stroke-width="1.6"/>
<path d="M896.2 451 L899 451 L899 454 L897.8 454.8 L895.4 452 Z" fill="#f08018"/>
<path d="M889.6 461.4 L890 459.6 L891.4 460.8 Z" fill="#2a6a2a"/>
<!-- full screen -->
<rect x="1028.9" y="451.8" width="14.4" height="11.6" fill="#fff" stroke="#8c8aa8" stroke-width="1.2"/>
<rect x="1030.6" y="456.6" width="7.4" height="4.8" fill="#f4f6f4" stroke="#7c7c88" stroke-width="0.9"/>
<path d="M1036.4 454 H1041 V458.6 L1039.4 457 L1036.4 460 L1035 458.6 L1038 455.6 Z" fill="#4a82f0"/>
<path d="M1036.6 458.4 L1039.6 455.4" stroke="#6ed84a" stroke-width="0.9"/>
<!-- IE page icon -->
<path d="M5.2 781.4 H13.4 L16.4 784.4 V796.2 H5.2 Z" fill="#e4e8fa" stroke="#6a6ab8" stroke-width="0.8"/>
<path d="M6.6 782.6 H12.4 V785 H6.6 Z" fill="#fff"/>
<text x="1.4" y="795" font-family="Liberation Sans, DejaVu Sans, sans-serif" font-weight="bold" font-size="18" fill="#1a86e6" stroke="#1a6ad0" stroke-width="0.3">e</text>
<path d="M2.2 793.4 C1.6 789 6 784.6 11.6 783.6" fill="none" stroke="#3aa8f0" stroke-width="1"/>
<!-- local intranet -->
<circle cx="1063.4" cy="785.6" r="4.4" fill="url(#globe)"/>
<path d="M1065.4 782.6 L1073.6 781.4 L1074 790.6 L1066 792 Z" fill="url(#mon)" stroke="#6a8ad0" stroke-width="0.6"/>
<path d="M1068 792 L1071 791.4 L1071.4 794 L1068.2 794.4 Z" fill="#c8c8e0"/>
<ellipse cx="1069.6" cy="795.2" rx="4.6" ry="1.8" fill="#e0e0f4" stroke="#8080c0" stroke-width="0.5"/>
</svg>
</div>
</body></html>
